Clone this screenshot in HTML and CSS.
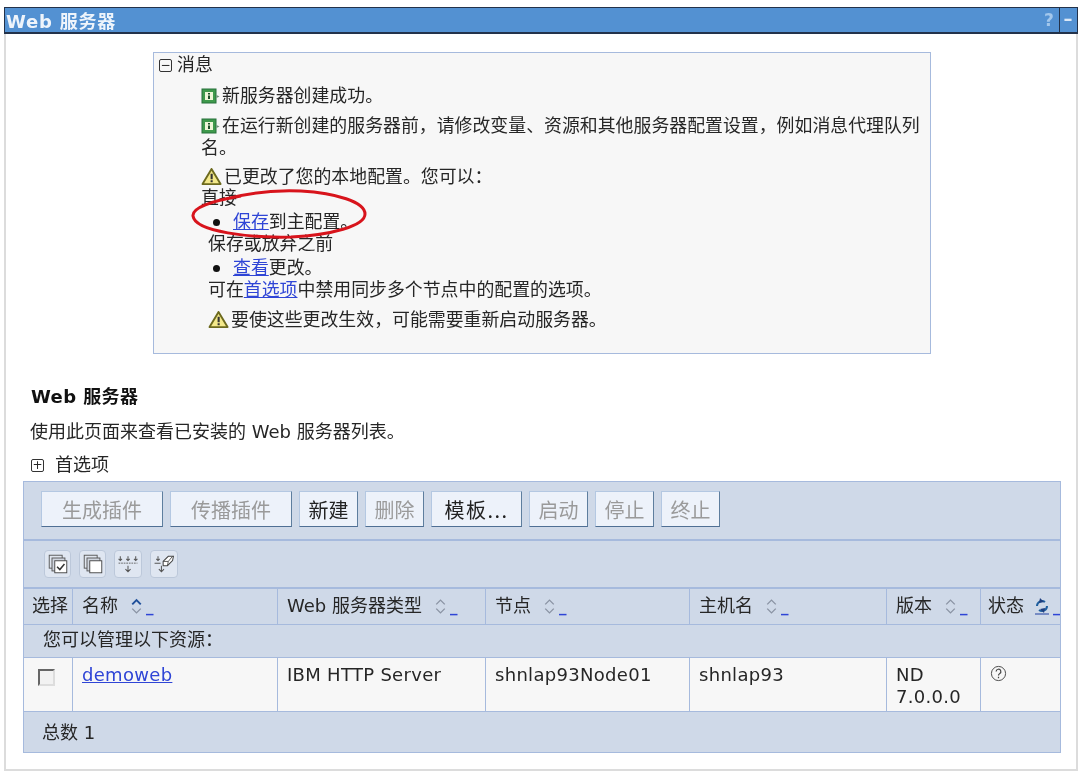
FILE: index.html
```html
<!DOCTYPE html>
<html lang="zh">
<head>
<meta charset="utf-8">
<title>Web 服务器</title>
<link rel="stylesheet" href="styles.css">
</head>
<body>
<svg class="defs" width="0" height="0" aria-hidden="true">
  <defs>
    <symbol id="info" viewBox="0 0 20 18">
      <rect x="1" y="2" width="14" height="14" fill="#3f9a4c" stroke="#27703a"/>
      <rect x="4" y="5" width="8" height="8" fill="#eef7d8"/>
      <path d="M7 6h2v1.500H7zM7 8.500h2V12H7z" fill="#1d4f2a"/>
      <path d="M15.500 8l3 1.500-3 1.500z" fill="#6f8f78"/>
    </symbol>
    <symbol id="warn" viewBox="0 0 24 20">
      <path d="M11 2L1.500 18h19z" fill="#f4e98a" stroke="#6d6a1e" stroke-width="2" stroke-linejoin="round"/>
      <path d="M10 7h2.200v6H10zM10 14h2.200v2H10z" fill="#333"/>
    </symbol>
    <symbol id="sort" viewBox="0 0 12 16">
      <path d="M2 6l4-4 4 4" fill="none" stroke="#8a93a3" stroke-width="1.300"/>
      <path d="M2 10l4 4 4-4" fill="none" stroke="#8a93a3" stroke-width="1.300"/>
    </symbol>
    <symbol id="sort-active" viewBox="0 0 12 16">
      <path d="M2 6l4-4 4 4" fill="none" stroke="#1f4f9a" stroke-width="1.800"/>
      <path d="M2 10l4 4 4-4" fill="none" stroke="#8a93a3" stroke-width="1.300"/>
    </symbol>
  </defs>
</svg>

<header class="titlebar">
  <span class="titlebar-text">Web 服务器</span>
  <span class="titlebar-help">?</span>
  <span class="titlebar-min">–</span>
</header>

<main class="panel">
  <section class="msgbox">
    <div class="msg-head"><span class="toggle">−</span>消息</div>
    <div class="msg msg-a"><svg class="ico-info"><use href="#info"/></svg>新服务器创建成功。</div>
    <div class="msg msg-b"><svg class="ico-info"><use href="#info"/></svg>在运行新创建的服务器前，请修改变量、资源和其他服务器配置设置，例如消息代理队列名。</div>
    <div class="msg msg-c"><svg class="ico-warn"><use href="#warn"/></svg>已更改了您的本地配置。您可以：</div>
    <div class="msg msg-d">直接</div>
    <div class="sub sub-bullet first"><span class="dot"></span><a href="#">保存</a>到主配置。</div>
    <div class="sub">保存或放弃之前</div>
    <div class="sub sub-bullet second"><span class="dot"></span><a href="#">查看</a>更改。</div>
    <div class="sub">可在<a href="#">首选项</a>中禁用同步多个节点中的配置的选项。</div>
    <div class="sub sub-warn"><svg class="ico-warn"><use href="#warn"/></svg>要使这些更改生效，可能需要重新启动服务器。</div>
    <svg class="circle" viewBox="0 0 176 52" aria-hidden="true">
      <path d="M30 12C60 4 90 2 110 3C145 5 174 14 174 26C174 38 140 47 100 49C60 50 4 44 2 28C1 20 20 13 50 8" fill="none" stroke="#d8141c" stroke-width="3"/>
    </svg>
  </section>

  <h2 class="page-head">Web 服务器</h2>
  <p class="page-desc">使用此页面来查看已安装的 Web 服务器列表。</p>
  <div class="prefs"><span class="toggle">+</span>首选项</div>

  <table class="grid">
    <colgroup>
      <col class="c1"><col class="c2"><col class="c3"><col class="c4"><col class="c5"><col class="c6"><col class="c7">
    </colgroup>
    <tbody>
      <tr>
        <td colspan="7" class="bar-buttons">
          <div class="btns">
            <button class="btn off long">生成插件</button>
            <button class="btn off long">传播插件</button>
            <button class="btn">新建</button>
            <button class="btn off">删除</button>
            <button class="btn wide">模板...</button>
            <button class="btn off">启动</button>
            <button class="btn off">停止</button>
            <button class="btn off">终止</button>
          </div>
        </td>
      </tr>
      <tr>
        <td colspan="7" class="bar-icons">
          <div class="iconbtns">
            <span class="iconbtn"><svg viewBox="0 0 26 28" class="ibsvg"><rect x="3.500" y="4.500" width="14" height="14" fill="#dfe5ee" stroke="#555"/><rect x="6.500" y="7.500" width="14" height="14" fill="#cfd5df" stroke="#555"/><rect x="9.500" y="10.500" width="13" height="13" fill="#fff" stroke="#444"/><path d="M12 17l3 3 5-6" fill="none" stroke="#333" stroke-width="1.600"/></svg></span>
            <span class="iconbtn"><svg viewBox="0 0 26 28" class="ibsvg"><rect x="3.500" y="4.500" width="14" height="14" fill="#dfe5ee" stroke="#555"/><rect x="6.500" y="7.500" width="14" height="14" fill="#cfd5df" stroke="#555"/><rect x="9.500" y="10.500" width="13" height="13" fill="#fff" stroke="#444"/></svg></span>
            <span class="iconbtn wide-ib"><svg viewBox="0 0 28 28" class="ibsvg"><path d="M5 5v5M3 8l2 2 2-2M14 5v5M12 8l2 2 2-2M23 5v5M21 8l2 2 2-2M14 16v7M11 20l3 3 3-3" fill="none" stroke="#555" stroke-width="1.200"/><path d="M3 13h22" stroke="#555" stroke-dasharray="2 1"/></svg></span>
            <span class="iconbtn wide-ib"><svg viewBox="0 0 28 28" class="ibsvg"><path d="M7 5v5M5 8l2 2 2-2M11 16v7M8 20l3 3 3-3M3 13h7" fill="none" stroke="#555" stroke-width="1.200"/><path d="M13 11l6-6h6l-1 5-6 6h-5z" fill="#fff" stroke="#444" stroke-width="1.200"/><path d="M13 11h6l5-6M19 11l-1 5" fill="none" stroke="#444"/></svg></span>
          </div>
        </td>
      </tr>
      <tr class="head">
        <th class="th-select">选择</th>
        <th>名称<svg class="sort"><use href="#sort-active"/></svg><a class="us" href="#">_</a></th>
        <th>Web 服务器类型<svg class="sort"><use href="#sort"/></svg><a class="us" href="#">_</a></th>
        <th>节点<svg class="sort"><use href="#sort"/></svg><a class="us" href="#">_</a></th>
        <th>主机名<svg class="sort"><use href="#sort"/></svg><a class="us" href="#">_</a></th>
        <th>版本<svg class="sort"><use href="#sort"/></svg><a class="us" href="#">_</a></th>
        <th class="th-status">状态<svg class="refresh" viewBox="0 0 16 18"><path d="M3 9a5 5 0 0 1 8-4M13 9a5 5 0 0 1-8 4" fill="none" stroke="#1f5f9f" stroke-width="2"/><path d="M6 1l-1 5 5-1zM10 16l1-5-5 1z" fill="#1f3f7f"/><path d="M1 17h14" stroke="#1f3f9f"/></svg><a class="us" href="#">_</a></th>
      </tr>
      <tr><td colspan="7" class="group">您可以管理以下资源：</td></tr>
      <tr class="data">
        <td class="cell-check"><span class="check"></span></td>
        <td><a href="#">demoweb</a></td>
        <td>IBM HTTP Server</td>
        <td>shnlap93Node01</td>
        <td>shnlap93</td>
        <td>ND 7.0.0.0</td>
        <td class="cell-status"><svg class="unknown" viewBox="0 0 18 18"><circle cx="9" cy="9" r="7.500" fill="none" stroke="#444"/><path d="M6.500 7a2.500 2.500 0 1 1 3.600 2.200c-.8.400-1.100.9-1.100 1.800M9 12.500v1.500" fill="none" stroke="#444" stroke-width="1.300"/></svg></td>
      </tr>
      <tr><td colspan="7" class="total">总数 1</td></tr>
    </tbody>
  </table>
</main>
</body>
</html>
```
FILE: styles.css
```css
* { box-sizing: border-box; }
html, body { margin: 0; padding: 0; background: #fff; }
body {
  padding: 7px 2px 0 4px;
  font-family: "DejaVu Sans", "Noto Sans CJK SC", sans-serif;
  font-size: 18px;
  color: #262626;
  filter: blur(0.45px);
}
.defs { position: absolute; }
a { color: #2f45d6; text-decoration: underline; }

.titlebar {
  display: flex;
  align-items: center;
  height: 27px;
  background: #5391d2;
  border: 1px solid #23324a;
  border-width: 1px 1px 2px 1px;
  color: #eef4fb;
  font-weight: bold;
  font-size: 18px;
  letter-spacing: .8px;
  padding-left: 1px;
}
.titlebar-text { flex: 1; }
.titlebar-help { width: 15px; color: #a3c7ec; font-size: 17px; }
.titlebar-min {
  width: 18px;
  height: 100%;
  border-left: 1px solid #23324a;
  text-align: center;
  color: #dbe8f6;
  line-height: 22px;
}

.panel {
  height: 737px;
  border: 1px solid #dcdcdc;
  border-width: 0 2px 2px 2px;
  padding: 18px 16px 0 17px;
}

.msgbox {
  position: relative;
  width: 778px;
  height: 302px;
  margin-left: 130px;
  padding: 1px 8px 0 5px;
  background: #f7f7f7;
  border: 1px solid #a6badd;
  line-height: 22px;
  font-size: 17.900px;
}
.msg-head { display: flex; align-items: center; }
.toggle {
  display: inline-flex;
  align-items: center;
  justify-content: center;
  width: 13px;
  height: 13px;
  margin-right: 5px;
  border: 1px solid #333;
  border-radius: 2px;
  font-size: 12px;
  line-height: 1;
}
.msg { margin-left: 42px; }
.msg-a { margin-top: 9px; }
.msg-b { margin-top: 8px; }
.msg-c { margin-top: 7px; }
.msg-d { line-height: 20px; }
.ico-info { width: 20px; height: 18px; margin-right: 1px; vertical-align: -3px; }
.ico-warn { width: 23px; height: 19px; vertical-align: -3px; }
.sub { margin-left: 49px; }
.sub-bullet { display: flex; align-items: center; margin-left: 54px; }
.first { margin-top: 3px; }
.second { margin-top: 2px; }
.sub-warn { margin-top: 8px; }
.dot {
  width: 7px;
  height: 7px;
  margin-right: 13px;
  border-radius: 50%;
  background: #111;
}
.circle {
  position: absolute;
  left: 37px;
  top: 135px;
  width: 176px;
  height: 52px;
}

.page-head {
  margin: 31px 0 0 8px;
  font-size: 18px;
  line-height: 24px;
  letter-spacing: .4px;
  color: #111;
}
.page-desc { margin: 11px 0 0 7px; font-size: 18px; line-height: 24px; }
.prefs {
  display: flex;
  align-items: center;
  margin: 9px 0 0 8px;
  font-size: 18px;
  line-height: 24px;
}
.prefs .toggle { margin-right: 11px; }

.grid {
  width: 1037px;
  margin: 4px 0 0 0;
  border-collapse: collapse;
  table-layout: fixed;
  background: #cfd9e8;
}
.c1 { width: 49px; }
.c2 { width: 205px; }
.c3 { width: 208px; }
.c4 { width: 204px; }
.c5 { width: 197px; }
.c6 { width: 94px; }
.c7 { width: 80px; }
.grid td, .grid th {
  border: 1px solid #a6badd;
  padding: 0;
  vertical-align: top;
  font-weight: normal;
  text-align: left;
}
.bar-buttons { height: 58px; border-bottom-width: 2px !important; padding: 9px 0 0 17px !important; }
.btns { display: flex; gap: 7px; }
.btn {
  height: 36px;
  width: 59px;
  padding: 0;
  background: #edf2fa;
  border: 1px solid;
  border-color: #b4c8e2 #5e7e9e #4f6f94 #b4c8e2;
  font: 20px "Noto Sans CJK SC", sans-serif;
  color: #222;
}
.btn.off { color: #9a9a9a; }
.btn.long { width: 122px; }
.btn.wide { width: 91px; letter-spacing: 1.500px; }
.bar-icons { height: 48px; border-bottom-width: 2px !important; padding: 9px 0 0 20px !important; }
.iconbtns { display: flex; gap: 8px; }
.iconbtn {
  display: flex;
  align-items: center;
  justify-content: center;
  width: 27px;
  height: 28px;
  background: #dfe6f1;
  border: 1px solid #bcc8da;
  border-radius: 4px;
}
.wide-ib { width: 28px; }
.ibsvg { width: 24px; height: 26px; }
.head th { height: 37px; padding: 5px 0 0 9px; font-size: 18px; line-height: 24px; white-space: nowrap; overflow: hidden; }
.head .th-select { padding-left: 8px; }
.head .th-status { padding-left: 7px; }
.sort { width: 13px; height: 17px; margin-left: 12px; vertical-align: -3px; }
.refresh { width: 16px; height: 18px; margin-left: 10px; vertical-align: -3px; }
.us { margin-left: 3px; font-size: 15px; text-decoration: none; color: #2f45d6; font-weight: bold; }
.group { height: 33px; padding: 3px 0 0 19px !important; font-size: 18px; line-height: 24px; }
.data td { height: 54px; background: #f7f7f7; padding: 6px 4px 0 9px; font-size: 18px; line-height: 22px; letter-spacing: .3px; }
.data .cell-check { padding: 11px 0 0 14px; }
.check {
  display: block;
  width: 17px;
  height: 17px;
  background: #f2f2f2;
  border: 2px solid;
  border-color: #666 #ddd #ddd #666;
}
.data .cell-status { padding-left: 5px; padding-top: 7px; }
.unknown { width: 17px; height: 17px; margin-left: 4px; }
.total { height: 41px; padding: 9px 0 0 18px !important; font-size: 18px; line-height: 24px; }
```
